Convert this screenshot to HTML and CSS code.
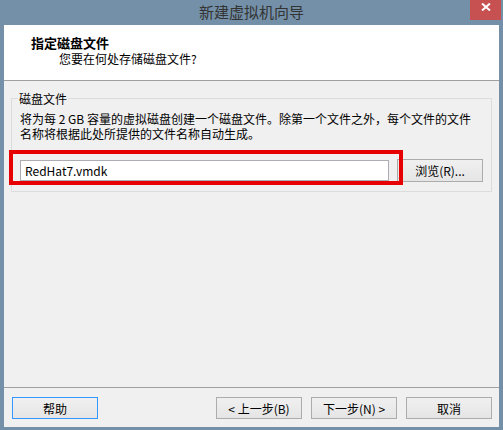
FILE: index.html
```html
<!DOCTYPE html>
<html lang="zh-CN">
<head>
  <meta charset="UTF-8" />
  <title>新建虚拟机向导</title>
  <link rel="stylesheet" href="styles.css">
</head>
<body>
  <div class="window">
    <div class="titlebar">
      <span class="title">新建虚拟机向导</span>
      <button class="close" aria-label="关闭">
        <svg width="10" height="8" viewBox="0 0 10 8"><path d="M1 0.5 L9 7.5 M9 0.5 L1 7.5" stroke="#fff" stroke-width="2" fill="none"/></svg>
      </button>
    </div>

    <div class="client">
      <div class="header">
        <div class="header-title">指定磁盘文件</div>
        <div class="header-sub">您要在何处存储磁盘文件?</div>
      </div>

      <div class="main">
        <fieldset class="group">
          <legend>磁盘文件</legend>
          <p class="desc">将为每 2 GB 容量的虚拟磁盘创建一个磁盘文件。除第一个文件之外，每个文件的文件名称将根据此处所提供的文件名称自动生成。</p>
          <div class="file-row">
            <input class="file-input" type="text" value="RedHat7.vmdk" />
            <button class="btn browse">浏览(R)...</button>
            <div class="highlight"></div>
          </div>
        </fieldset>
      </div>

      <div class="footer">
        <button class="btn default">帮助</button>
        <div class="nav">
          <button class="btn">&lt; 上一步(B)</button>
          <button class="btn">下一步(N) &gt;</button>
          <button class="btn">取消</button>
        </div>
      </div>
    </div>
  </div>
</body>
</html>
```

FILE: styles.css
```css
html, body {
  margin: 0;
  padding: 0;
}

body {
  background: #7390a8;
  font-family: "Noto Sans CJK SC", "Liberation Sans", sans-serif;
  font-size: 12px;
  color: #000;
}

.window {
  width: 503px;
  height: 430px;
  padding: 0 4px 3px 4px;
  box-sizing: border-box;
  display: flex;
  flex-direction: column;
}

.titlebar {
  position: relative;
  height: 25px;
  display: flex;
  align-items: center;
  justify-content: center;
}

.title {
  font-size: 15px;
  color: #333;
  line-height: 20px;
  margin-top: -2px;
}

.close {
  position: absolute;
  top: 0;
  right: -2px;
  width: 31px;
  height: 20px;
  border: none;
  padding: 0;
  background: #c75050;
  display: flex;
  align-items: center;
  justify-content: center;
}

.close svg {
  display: block;
  margin-top: -7px;
}

.client {
  flex: 1;
  background: #f0f0f0;
  display: flex;
  flex-direction: column;
}

.header {
  height: 56px;
  background: #fff;
  border-bottom: 1px solid #a0a0a0;
  padding: 10px 0 0 27px;
  box-sizing: border-box;
}

.header-title {
  font-size: 13px;
  font-weight: bold;
  line-height: 16px;
}

.header-sub {
  line-height: 16px;
  margin-left: 28px;
}

.main {
  flex: 1;
  padding: 10px 8px 0 7px;
}

.group {
  margin: 0;
  border: 1px solid #dcdcdc;
  padding: 0 8px 9px 8px;
}

.group legend {
  padding: 0 1px;
  margin-left: -2px;
  line-height: 15px;
}

.desc {
  margin: 5px 0 0 0;
  line-height: 15px;
  padding-right: 6px;
}

.file-row {
  position: relative;
  display: flex;
  align-items: center;
  gap: 8px;
  margin-top: 18px;
}

.file-input {
  width: 369px;
  height: 21px;
  box-sizing: border-box;
  border: 1px solid #abadb3;
  background: #fff;
  font-family: inherit;
  font-size: 12px;
  padding: 0 4px;
  margin: 0;
  outline: none;
}

.btn {
  width: 86px;
  height: 22px;
  box-sizing: border-box;
  border: 1px solid #acacac;
  background: linear-gradient(#f0f0f0, #e5e5e5);
  font-family: inherit;
  font-size: 12px;
  color: #000;
  padding: 0;
  margin: 0;
}

.browse {
  height: 23px;
}

.btn.default {
  border-color: #3399ff;
}

.highlight {
  position: absolute;
  left: -11px;
  top: -9px;
  width: 394px;
  height: 35px;
  box-sizing: border-box;
  border: 4px solid #e60000;
  pointer-events: none;
}

.footer {
  border-top: 1px solid #a0a0a0;
  padding: 9px 7px 8px 8px;
  display: flex;
  justify-content: space-between;
}

.nav {
  display: flex;
  gap: 9px;
}
```
